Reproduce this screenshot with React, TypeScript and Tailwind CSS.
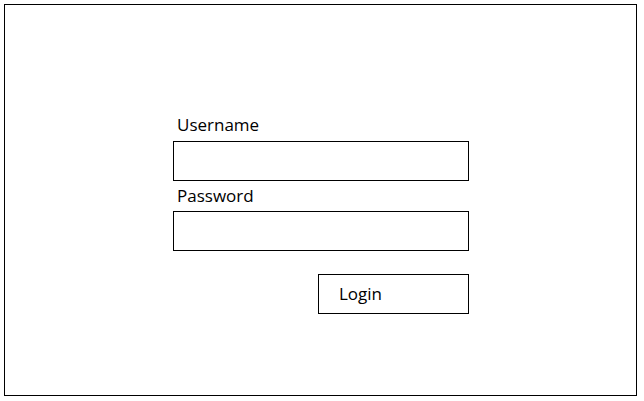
export default function App() {
  return (
    <div
      className="w-[644px] h-[401px] bg-white pt-[4px] pl-[4px]"
      style={{ fontFamily: '"Open Sans", "Noto Sans", sans-serif' }}
    >
      <div className="w-[633px] h-[392px] border border-black pt-[110px] pl-[168px]">
        <form className="flex flex-col w-[296px]" onSubmit={(e) => e.preventDefault()}>
          <label className="h-[20px] leading-[20px] text-[17px] text-black pl-[4px]">Username</label>
          <input type="text" className="mt-[6px] h-[40px] border border-black outline-none px-2" />
          <label className="mt-[5px] h-[20px] leading-[20px] text-[17px] text-black pl-[4px]">Password</label>
          <input type="password" className="mt-[5px] h-[40px] border border-black outline-none px-2" />
          <button
            type="submit"
            className="mt-[23px] self-end w-[151px] h-[40px] border border-black text-left pl-[20px] text-[17px] leading-[20px] text-black"
          >
            Login
          </button>
        </form>
      </div>
    </div>
  );
}
